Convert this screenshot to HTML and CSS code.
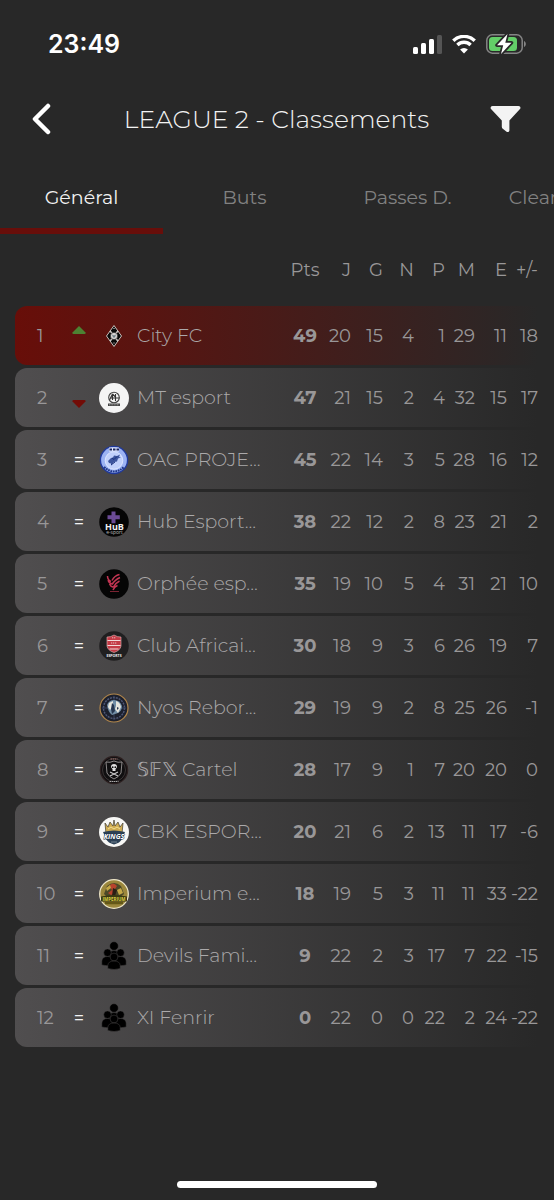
FILE: index.html
```html
<!DOCTYPE html>
<html lang="fr">
<head>
    <meta charset="UTF-8">
    <meta name="viewport" content="width=device-width, initial-scale=1.0">
    <title>LEAGUE 2 - Classements</title>
    <link rel="stylesheet" href="styles.css">
</head>
<body>

    <div class="status-bar">
        <span class="time">23:49</span>
        <div class="status-icons">
            <svg width="29" height="19" viewBox="0 0 29 19" fill="#fff">
                <rect x="0" y="12" width="5" height="7" rx="1.5"/>
                <rect x="8" y="8" width="5" height="11" rx="1.5"/>
                <rect x="16" y="4" width="5" height="15" rx="1.5"/>
                <rect x="24" y="0" width="5" height="19" rx="1.5" fill="#555"/>
            </svg>
            <svg width="26" height="19" viewBox="0 0 26 19">
                <path d="M2.3 6.8a15.2 15.2 0 0 1 21.4 0M6.4 11a9.4 9.4 0 0 1 13.2 0" transform="translate(0 -1)" fill="none" stroke="#fff" stroke-width="3.4"/>
                <path d="M13 18.6l-3.9-4a5.6 5.6 0 0 1 7.8 0z" fill="#fff"/>
            </svg>
            <svg width="40" height="22" viewBox="0 0 40 22">
                <rect x="0.8" y="1.8" width="35.4" height="18.4" rx="5.5" fill="none" stroke="#858585" stroke-width="1.5"/>
                <path d="M38 8v6c2.4-1 2.4-5 0-6z" fill="#858585"/>
                <rect x="3" y="4" width="28" height="14" rx="3.5" fill="#63ce68"/>
                <path d="M21.5 1L11 12.3h6.2L15 21 25.5 9.7h-6.2z" fill="#fff" stroke="#282828" stroke-width="3.5" stroke-linejoin="round" paint-order="stroke"/>
            </svg>
        </div>
    </div>

    <header class="header">
        <button class="icon-button" aria-label="Retour">
            <svg width="20" height="32" viewBox="0 0 20 32"><path d="M17 3L4 16l13 13" fill="none" stroke="#fff" stroke-width="4.5" stroke-linecap="round" stroke-linejoin="round"/></svg>
        </button>
        <h1>LEAGUE 2 - Classements</h1>
        <button class="icon-button" aria-label="Filtrer">
            <svg width="31" height="28" viewBox="0 0 31 28"><path d="M2.5 1h26q2.8.5 1.7 2.8L19.4 15.5v10q-.5 2.4-2.8 1.2l-3.8-3q-1-.7-1-2v-6.2L.8 3.8Q-.1 1.500 2.500 1z" fill="#f3f3f3"/></svg>
        </button>
    </header>

    <nav class="tabs">
        <button class="tab active">Général</button>
        <button class="tab">Buts</button>
        <button class="tab">Passes D.</button>
        <button class="tab">Clean Sheets</button>
    </nav>

    <!-- shared shape for teams without a logo -->
    <svg class="defs" width="0" height="0">
        <symbol id="people" viewBox="0 0 30 30">
            <g fill="#000" stroke="#484647" stroke-width="0.5">
                <circle cx="15" cy="5" r="4.300"/>
                <path d="M9.500 16v-3q1-3.500 5.500-3.500t5.500 3.500v3z"/>
                <circle cx="8.500" cy="11.700" r="3.800"/>
                <circle cx="21.500" cy="11.700" r="3.800"/>
                <path d="M2.800 24v-4q.5-4.500 5.800-4.500 5 0 5.500 4.500v4q-6 1.500-11.300 0z"/>
                <path d="M27.200 24v-4q-.5-4.500-5.800-4.500-5 0-5.500 4.500v4q6 1.500 11.300 0z"/>
                <circle cx="15" cy="16" r="3.900"/>
                <path d="M8.800 27.500v-3.200q.5-4.300 6.200-4.300t6.200 4.300v3.200q-6 2-12.400 0z"/>
            </g>
        </symbol>
    </svg>

    <main>
        <table class="ranking">
            <thead>
                <tr>
                    <td></td><td></td><td></td><td></td>
                    <th class="pts">Pts</th><th>J</th><th>G</th><th>N</th><th>P</th><th>M</th><th>E</th><th>+/-</th>
                </tr>
            </thead>
            <tbody>
                <tr class="mine">
                    <td class="rank">1</td>
                    <td class="trend"><svg width="14" height="22" viewBox="0 0 14 22"><path d="M7 1l6.500 6.500q.5 1.500-1 1.500h-11q-1.500 0-1-1.500z" fill="#4c8232"/></svg></td>
                    <td class="logo">
                        <svg width="30" height="30" viewBox="0 0 30 30">
                            <path d="M15 4.500l7.500 10.500L15 25.500 7.500 15z" fill="#080808" stroke="#c9c1be" stroke-width="1"/>
                            <path d="M11 9.800L19 20.200M19 9.800L11 20.200" stroke="#d0c9c6" stroke-width="1.400"/>
                            <circle cx="15" cy="15" r="3.600" fill="#d8d5d3" stroke="#222" stroke-width="0.600"/>
                            <path d="M13 13.500l2 1 2-1-1 3h-2z" fill="#718087"/>
                            <path d="M14 7.500h2M14 22h2" stroke="#777"/>
                        </svg>
                    </td>
                    <td class="name">City FC</td>
                    <td class="pts">49</td><td>20</td><td>15</td><td>4</td><td>1</td><td>29</td><td>11</td><td>18</td>
                </tr>
                <tr>
                    <td class="rank">2</td>
                    <td class="trend"><svg width="14" height="22" viewBox="0 0 14 22"><path d="M7 21L.5 14.500q-.5-1.500 1-1.500h11q1.500 0 1 1.500z" fill="#720c07"/></svg></td>
                    <td class="logo">
                        <svg width="30" height="30" viewBox="0 0 30 30">
                            <circle cx="15" cy="15" r="15" fill="#f4f4f4"/>
                            <circle cx="15" cy="14.500" r="5.300" fill="none" stroke="#444" stroke-width="1.100"/>
                            <path d="M10.500 17l3-6v6M13.500 11l3 3v4M16.500 11v4h4M11 15h5" fill="none" stroke="#333" stroke-width="1.100"/>
                            <rect x="9" y="20.500" width="12" height="2.500" fill="#444"/>
                            <path d="M10 21.800h10" stroke="#bbb" stroke-width="0.700" stroke-dasharray="1 .6"/>
                        </svg>
                    </td>
                    <td class="name">MT esport</td>
                    <td class="pts">47</td><td>21</td><td>15</td><td>2</td><td>4</td><td>32</td><td>15</td><td>17</td>
                </tr>
                <tr>
                    <td class="rank">3</td>
                    <td class="trend">=</td>
                    <td class="logo">
                        <svg width="30" height="30" viewBox="0 0 30 30">
                            <circle cx="15" cy="15" r="13.600" fill="#9bb2f3" stroke="#20399b" stroke-width="1.400"/>
                            <circle cx="15" cy="15.500" r="8.800" fill="#c1d0fb" stroke="#e7edff" stroke-width="0.800"/>
                            <path d="M10 2.500h10v4H10z" fill="#e2e9ff"/>
                            <path d="M10.500 3.500h2.500v2h-2.500zM14 3.500h2.500v2H14zM17.500 3.500H20v2h-2.500z" fill="#18245c"/>
                            <path d="M10 18l-1-2 3-3 2-.5 1-2 3 .5 3-1.500-1 2.500 2 .5-3 1-1 3-3 .5-3 3.500 0-2z" fill="#3d559e"/>
                            <path d="M13 13l2 1.500 3-3M12 20l4-3" stroke="#1c317d" fill="none"/>
                            <path d="M5 22q10 9 20 0" fill="none" stroke="#203786" stroke-width="2" stroke-dasharray="1.800 .7"/>
                        </svg>
                    </td>
                    <td class="name">OAC PROJE...</td>
                    <td class="pts">45</td><td>22</td><td>14</td><td>3</td><td>5</td><td>28</td><td>16</td><td>12</td>
                </tr>
                <tr>
                    <td class="rank">4</td>
                    <td class="trend">=</td>
                    <td class="logo">
                        <svg width="30" height="30" viewBox="0 0 30 30">
                            <circle cx="15" cy="15" r="14.800" fill="#050505"/>
                            <path d="M12.500 4.500h4v3.800h4.300v4h-4.300v4h-4v-4H8.500v-4h4z" fill="#6b4b96"/>
                            <text x="15.500" y="22.500" font-size="9" class="logo-text" fill="#f1f1f1">HuB</text>
                            <text x="15.500" y="26.500" font-size="5" class="logo-text light" fill="#bbb">e-sport</text>
                        </svg>
                    </td>
                    <td class="name">Hub Esport...</td>
                    <td class="pts">38</td><td>22</td><td>12</td><td>2</td><td>8</td><td>23</td><td>21</td><td>2</td>
                </tr>
                <tr>
                    <td class="rank">5</td>
                    <td class="trend">=</td>
                    <td class="logo">
                        <svg width="30" height="30" viewBox="0 0 30 30">
                            <circle cx="15" cy="15" r="14.800" fill="#050505"/>
                            <g fill="none" stroke="#c33553" stroke-width="1.500">
                                <path d="M8.500 7q0 4 3.500 5.500M9 11q1 3.500 4 4M10.500 15q1 2.500 3.500 3"/>
                                <path d="M20.500 5.500q-5 1-7.500 6M21 8.500q-5 2-8 7M20.500 12q-4 2-6.500 6.500M18.500 16.500q-3 1-4.500 4.500"/>
                            </g>
                            <path d="M11 22.500h9" stroke="#982b3d" stroke-width="0.800"/>
                        </svg>
                    </td>
                    <td class="name">Orphée esp...</td>
                    <td class="pts">35</td><td>19</td><td>10</td><td>5</td><td>4</td><td>31</td><td>21</td><td>10</td>
                </tr>
                <tr>
                    <td class="rank">6</td>
                    <td class="trend">=</td>
                    <td class="logo">
                        <svg width="30" height="30" viewBox="0 0 30 30">
                            <circle cx="15" cy="15" r="14.800" fill="#201f20"/>
                            <path d="M8 6q3.500.3 7-2 3.500 2.300 7 2v9q-.8 4.500-7 6.500-6.200-2-7-6.500z" fill="#c43b46" stroke="#e8b9bb" stroke-width="0.600"/>
                            <path d="M8.500 9.500h13M8.500 14.500h13M10.500 18h9" stroke="#f1d9d9" stroke-width="1.200"/>
                            <path d="M12 12h6M13 6.800h4" stroke="#f1d9d9" stroke-width="0.800" stroke-dasharray="1.200 .7"/>
                            <text x="15" y="26" font-size="3.500" class="logo-text" fill="#eee">ESPORTS</text>
                        </svg>
                    </td>
                    <td class="name">Club Africai...</td>
                    <td class="pts">30</td><td>18</td><td>9</td><td>3</td><td>6</td><td>26</td><td>19</td><td>7</td>
                </tr>
                <tr>
                    <td class="rank">7</td>
                    <td class="trend">=</td>
                    <td class="logo">
                        <svg width="30" height="30" viewBox="0 0 30 30">
                            <circle cx="15" cy="15" r="14" fill="#1c202d" stroke="#b2874b" stroke-width="1.200"/>
                            <circle cx="15" cy="15" r="10.500" fill="none" stroke="#4d5674" stroke-width="1.500" stroke-dasharray="2 1"/>
                            <path d="M15 3v24M3 15h24" stroke="#3f4b69" stroke-width="0.800"/>
                            <path d="M8 12q2-5 7-5 6 0 8 6 0 5-4 7l-6 2q-4-3-5-10z" fill="#708da5"/>
                            <path d="M10 10l4-2v5l-3 4-2-3zM17 8q4 1 5 6l-3 6-3-4 1-3z" fill="#e5e4dc"/>
                            <path d="M13 10l2 2 1 6-3 3-1-5zM18 14l2 1-2 2z" fill="#26364f"/>
                        </svg>
                    </td>
                    <td class="name">Nyos Rebor...</td>
                    <td class="pts">29</td><td>19</td><td>9</td><td>2</td><td>8</td><td>25</td><td>26</td><td>-1</td>
                </tr>
                <tr>
                    <td class="rank">8</td>
                    <td class="trend">=</td>
                    <td class="logo">
                        <svg width="30" height="30" viewBox="0 0 30 30">
                            <circle cx="15" cy="15" r="13.600" fill="#100f10" stroke="#2d2020" stroke-width="1.300"/>
                            <circle cx="15" cy="15" r="11.500" fill="none" stroke="#584b4b" stroke-width="0.600"/>
                            <path d="M7 7q4 1 8-1 4 2 8 1l-1 11q-2 4-7 6-5-2-7-6z" fill="none" stroke="#9a9696" stroke-width="0.900"/>
                            <path d="M11 17l8 4M19 17l-8 4" stroke="#ccc" stroke-width="1.100"/>
                            <path d="M12 11q.5-2 3-2t3 2q.3 2-1.500 3v2h-3v-2q-1.700-1-1.500-3z" fill="#e3e3e3"/>
                            <circle cx="13.700" cy="12.200" r="0.900" fill="#111"/>
                            <circle cx="16.300" cy="12.200" r="0.900" fill="#111"/>
                            <path d="M11.500 4h7" stroke="#a67771" stroke-dasharray="1.500 .6"/>
                            <path d="M10.500 26.500h9" stroke="#aaa" stroke-dasharray="1.500 .6"/>
                        </svg>
                    </td>
                    <td class="name">𝕊𝔽𝕏 Cartel</td>
                    <td class="pts">28</td><td>17</td><td>9</td><td>1</td><td>7</td><td>20</td><td>20</td><td>0</td>
                </tr>
                <tr>
                    <td class="rank">9</td>
                    <td class="trend">=</td>
                    <td class="logo">
                        <svg width="30" height="30" viewBox="0 0 30 30">
                            <circle cx="15" cy="15" r="15" fill="#f7f7f5"/>
                            <path d="M6 6l3 4 2-5 3 4 1-6 1 6 3-4 2 5 3-4-1 11H7z" fill="#cfac52" stroke="#3e3b30" stroke-width="0.700"/>
                            <path d="M9 12l3-2 3 2 3-2 3 2" stroke="#f3df91" fill="none"/>
                            <path d="M4 15q11-3 22 0l-3 7q-2 4-8 5.500-6-1.500-8-5.500z" fill="#2b4055"/>
                            <text x="15" y="21.500" font-size="7" class="logo-text kings" fill="#fff">KINGS</text>
                            <path d="M12 25h6" stroke="#8795a0" stroke-width="0.800"/>
                        </svg>
                    </td>
                    <td class="name">CBK ESPOR...</td>
                    <td class="pts">20</td><td>21</td><td>6</td><td>2</td><td>13</td><td>11</td><td>17</td><td>-6</td>
                </tr>
                <tr>
                    <td class="rank">10</td>
                    <td class="trend">=</td>
                    <td class="logo">
                        <svg width="30" height="30" viewBox="0 0 30 30">
                            <circle cx="15" cy="15" r="14.300" fill="#9b873c" stroke="#eee6c8" stroke-width="1.300"/>
                            <path d="M5 15l3-8q7-6 14 0l3 8-5 4H9z" fill="#4c4928"/>
                            <path d="M10 7q4-5 8 0l-2 3 1 4-5 2-3-2 4-3z" fill="#b7432c"/>
                            <path d="M7 9l4-3 1 3-4 3zM18 11l4-2 2 5-4 2z" fill="#c5a948"/>
                            <path d="M14 9l4 2-2 6h-3z" fill="#291e15"/>
                            <path d="M2 17.500q13-3 26 0v5H2z" fill="#3a3912"/>
                            <text x="15" y="21.500" font-size="4.500" class="logo-text" fill="#ddd046">IMPERIUM</text>
                            <path d="M6 24h18" stroke="#645817" stroke-width="2.500"/>
                        </svg>
                    </td>
                    <td class="name">Imperium e...</td>
                    <td class="pts">18</td><td>19</td><td>5</td><td>3</td><td>11</td><td>11</td><td>33</td><td>-22</td>
                </tr>
                <tr>
                    <td class="rank">11</td>
                    <td class="trend">=</td>
                    <td class="logo"><svg width="30" height="30"><use href="#people"/></svg></td>
                    <td class="name">Devils Fami...</td>
                    <td class="pts">9</td><td>22</td><td>2</td><td>3</td><td>17</td><td>7</td><td>22</td><td>-15</td>
                </tr>
                <tr>
                    <td class="rank">12</td>
                    <td class="trend">=</td>
                    <td class="logo"><svg width="30" height="30"><use href="#people"/></svg></td>
                    <td class="name">XI Fenrir</td>
                    <td class="pts">0</td><td>22</td><td>0</td><td>0</td><td>22</td><td>2</td><td>24</td><td>-22</td>
                </tr>
            </tbody>
        </table>
    </main>

    <footer class="home-area">
        <div class="home-bar"></div>
    </footer>

</body>
</html>
```
FILE: styles.css
```css
* {
    margin: 0;
    padding: 0;
    box-sizing: border-box;
}
body {
    min-height: 100vh;
    display: flex;
    flex-direction: column;
    overflow-x: hidden;
    font-family: Montserrat, Inter, "DejaVu Sans", sans-serif;
    font-weight: 400;
    background-color: #282828;
    color: #999798;
}
button {
    font: inherit;
    color: inherit;
    background: none;
    border: none;
    cursor: pointer;
}
svg {
    display: block;
}
.defs {
    position: absolute;
}
.status-bar {
    height: 88px;
    padding: 0 28px 0 48px;
    display: flex;
    justify-content: space-between;
    align-items: center;
    color: #fff;
}
.time {
    font-family: Inter, sans-serif;
    font-size: 25px;
    font-weight: 600;
}
.status-icons {
    display: flex;
    align-items: center;
    gap: 9px;
}
.header {
    height: 61px;
    padding: 0 32px 0 31px;
    display: flex;
    justify-content: space-between;
    align-items: center;
    color: #f3f3f3;
}
.header h1 {
    font-size: 25px;
    font-weight: 300;
}
.icon-button {
    width: 32px;
    height: 32px;
    display: flex;
    align-items: center;
}
.tabs {
    height: 85px;
    display: flex;
    overflow: hidden;
}
.tab {
    flex: 0 0 163px;
    padding-top: 18px;
    font-size: 19px;
    color: #818181;
    border-bottom: 6px solid transparent;
}
.tab.active {
    color: #f3f3f3;
    border-bottom-color: #680e0a;
}
.ranking,
.ranking thead {
    display: block;
}
.ranking {
    padding-left: 15px;
    font-size: 18px;
}
.ranking tbody {
    display: flex;
    flex-direction: column;
    gap: 3px;
}
.ranking tr {
    display: grid;
    grid-template-columns: 30px 24px 46px 1fr 40px 26px 32px 31px 31px 30px 32px 31px;
    align-items: center;
    height: 59px;
    padding: 0 16px 0 22px;
    border-radius: 12px;
}
.ranking thead tr {
    height: 72px;
}
.ranking tbody tr {
    background: linear-gradient(to right, #504e4f, #282828 97%);
}
.ranking tbody tr.mine {
    background: linear-gradient(to right, #680e09, #282828 97%);
}
.ranking td,
.ranking th {
    text-align: right;
    font-weight: 400;
    white-space: nowrap;
}
.ranking .rank,
.ranking .name {
    text-align: left;
}
.ranking .name {
    font-size: 19px;
    font-weight: 300;
    color: #aba9aa;
}
.ranking .trend {
    color: #f3f3f3;
}
.ranking .trend,
.ranking .logo {
    display: flex;
    justify-content: center;
}
.ranking .pts {
    text-align: center;
}
.ranking td.pts {
    font-weight: 700;
}
.logo-text {
    font-family: "Open Sans", sans-serif;
    font-weight: 700;
    text-anchor: middle;
}
.logo-text.light {
    font-weight: 400;
}
.logo-text.kings {
    font-style: italic;
    stroke: #223348;
    stroke-width: 1px;
    paint-order: stroke;
}
.home-area {
    margin-top: auto;
    padding-bottom: 12px;
    display: flex;
    justify-content: center;
}
.home-bar {
    width: 36%;
    height: 7px;
    border-radius: 4px;
    background-color: #fff;
}
```
